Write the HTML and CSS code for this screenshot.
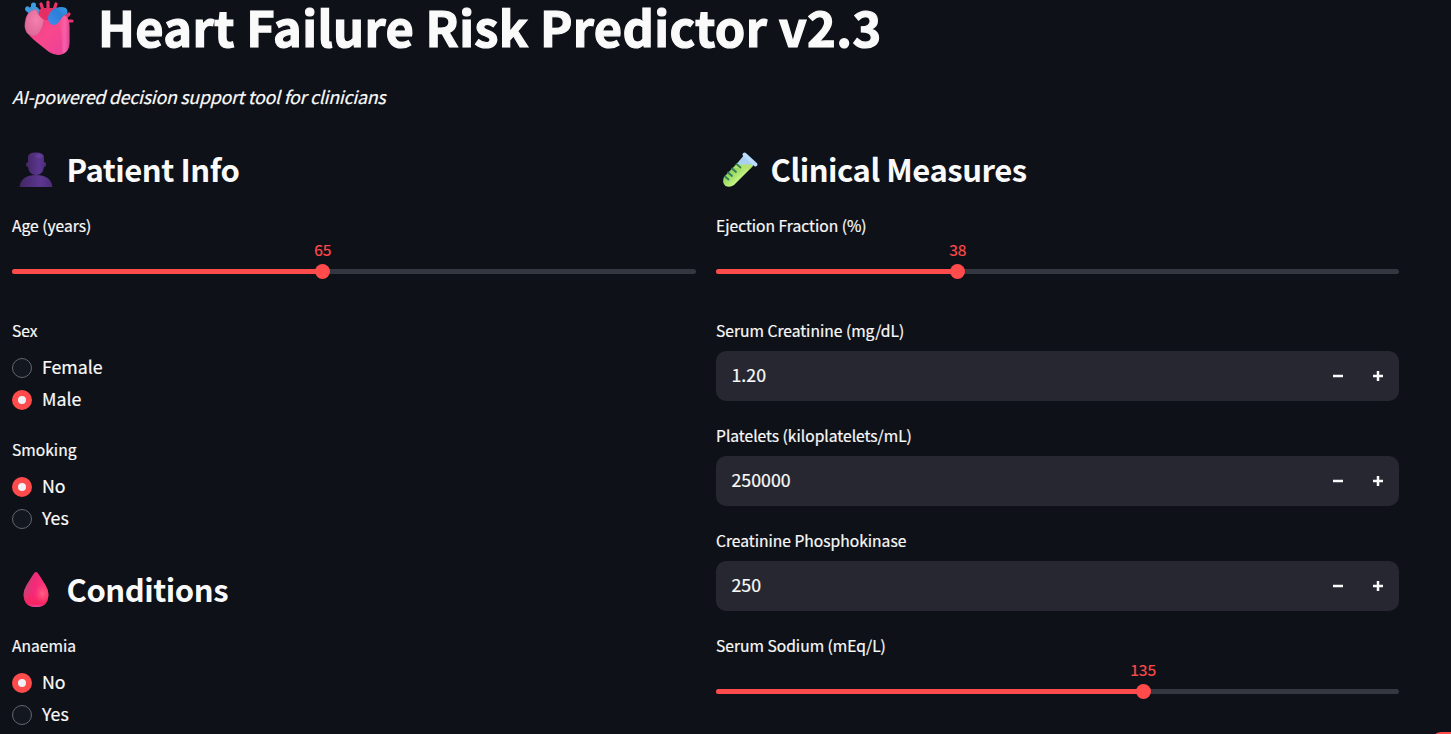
FILE: index.html
```html
<!DOCTYPE html>
<html lang="en">
<head>
<meta charset="utf-8">
<title>Heart Failure Risk Predictor</title>
<link rel="stylesheet" href="styles.css">
</head>
<body>
<main class="app">
  <h1 class="title">
    <svg class="icon-heart" viewBox="0 0 65 60">
      <defs>
        <linearGradient id="hb" x1="0" y1="0" x2="1" y2="1"><stop offset="0" stop-color="#f23b80"/><stop offset=".5" stop-color="#f8478c"/><stop offset="1" stop-color="#e9409c"/></linearGradient>
        <linearGradient id="hr" x1="0" y1="0" x2="1" y2="0"><stop offset="0" stop-color="#ff7db8" stop-opacity="0"/><stop offset=".6" stop-color="#ff8cc4"/><stop offset="1" stop-color="#c83e8c"/></linearGradient>
        <radialGradient id="hl" cx=".6" cy=".4" r=".65"><stop offset="0" stop-color="#f580ae"/><stop offset="1" stop-color="#dc6897"/></radialGradient>
        <linearGradient id="bl" x1="0" y1="1" x2="1" y2="0"><stop offset="0" stop-color="#3f8ded"/><stop offset=".6" stop-color="#2d7fd6"/><stop offset="1" stop-color="#369ce8"/></linearGradient>
      </defs>
      <path d="M12.500 9l5 4M18.500 5l-.5 8" stroke="#3d9be2" stroke-width="5" stroke-linecap="round"/>
      <path d="M15 7l7 0l6 6l-10 4z" fill="#3d9be2"/>
      <path d="M26 4l2 6M33 2v6M41 4l-2 6M49 19l5-5M50 21h7" stroke="#e8346a" stroke-width="3.200" stroke-linecap="round"/>
      <path d="M19 14L46 13Q55 16 54.500 27V43Q54 54.500 43 55Q39 55 34 52L19 40Q10 33 12 24Q14 17 19 14z" fill="url(#hb)"/>
      <path d="M43 21Q49 14 52 17Q54.500 21 54.500 28V42Q54 52 47 54Q48 34 43 21z" fill="url(#hr)" opacity=".4"/>
      <path d="M24 17Q22 8 29 8H40Q45 9 42 15L37 19Q29 22 24 17z" fill="#e62e64"/>
      <path d="M10 23Q11 11 21 9Q23 16 29 20Q27 31 22 35Q17 38 12 33Q9 28 10 23z" fill="url(#hl)" stroke="#c8447f" stroke-opacity=".4" stroke-width=".8"/>
      <path d="M33 18C34 10 43 5 51 8Q54 12 51 15C46 15 46 23 40 25Q33 25 33 18z" fill="url(#bl)"/>
    </svg>
    <span>Heart Failure Risk Predictor v2.3</span>
  </h1>
  <p class="tagline">AI-powered decision support tool for clinicians</p>
  <div class="columns">
    <section class="column">
      <h2 class="heading">
        <svg class="icon" viewBox="0 0 48 48">
          <defs><linearGradient id="pg" x1="0" y1="0" x2="1" y2="0"><stop offset="0" stop-color="#422761"/><stop offset=".65" stop-color="#5c3691"/><stop offset="1" stop-color="#4a2b76"/></linearGradient></defs>
          <path d="M7.500 41Q9 29 24 29Q39 29 40.500 41z" fill="url(#pg)"/>
          <path d="M16 11Q16 6.500 24 6.500Q32 6.500 32 11V16Q34.500 16 34 19Q34 21 32 21Q31 29 24 29Q17 29 16 21Q14 21 14 19Q14 16 16 16z" fill="url(#pg)"/>
          <ellipse cx="27" cy="10" rx="3.500" ry="1.800" fill="#7651a6" opacity=".4"/>
        </svg>
        <span>Patient Info</span>
      </h2>
      <div class="field slider-field">
        <label class="label">Age (years)</label>
        <div class="slider"><div class="fill" style="width:45.450%"><span class="value">65</span></div></div>
      </div>
      <div class="field radio-field">
        <label class="label">Sex</label>
        <div class="options">
          <div class="option"><i class="dot"></i><span>Female</span></div>
          <div class="option"><i class="dot on"></i><span>Male</span></div>
        </div>
      </div>
      <div class="field radio-field">
        <label class="label">Smoking</label>
        <div class="options">
          <div class="option"><i class="dot on"></i><span>No</span></div>
          <div class="option"><i class="dot"></i><span>Yes</span></div>
        </div>
      </div>
      <h2 class="heading">
        <svg class="icon" viewBox="0 0 48 48">
          <defs>
            <linearGradient id="dg" x1="0" y1=".2" x2="1" y2=".5"><stop offset="0" stop-color="#b84a6c"/><stop offset=".45" stop-color="#f5287a"/><stop offset="1" stop-color="#ff3f74"/></linearGradient>
            <radialGradient id="ds" cx=".75" cy=".62" r=".3"><stop offset="0" stop-color="#ff6d86" stop-opacity=".8"/><stop offset="1" stop-color="#ff4478" stop-opacity="0"/></radialGradient>
            <linearGradient id="db" x1="0" y1="0" x2="0" y2="1"><stop offset=".6" stop-color="#ff1f62" stop-opacity="0"/><stop offset=".92" stop-color="#fa2460"/><stop offset="1" stop-color="#e84bb0"/></linearGradient>
            <path id="drop" d="M24 6Q25.500 6 26.500 8L33.500 19Q36.500 24 36.500 28.500Q36 41 24 41Q12 41 11.500 28.500Q11.500 24 14.500 19L21.500 8Q22.500 6 24 6z"/>
          </defs>
          <use href="#drop" fill="url(#dg)"/>
          <use href="#drop" fill="url(#db)"/>
          <use href="#drop" fill="url(#ds)"/>
        </svg>
        <span>Conditions</span>
      </h2>
      <div class="field radio-field">
        <label class="label">Anaemia</label>
        <div class="options">
          <div class="option"><i class="dot on"></i><span>No</span></div>
          <div class="option"><i class="dot"></i><span>Yes</span></div>
        </div>
      </div>
    </section>
    <section class="column">
      <h2 class="heading">
        <svg class="icon" viewBox="0 0 48 48">
          <defs><linearGradient id="tg" x1=".2" y1=".2" x2=".75" y2=".8"><stop offset="0" stop-color="#83bc62"/><stop offset=".4" stop-color="#9ad963"/><stop offset=".8" stop-color="#c7f582"/></linearGradient></defs>
          <path d="M27 11L37 20L18 39Q14 42 9.500 40Q5.500 36 8 31z" fill="url(#tg)"/>
          <path d="M28 9L39 18L35 21L21 18z" fill="#a9d0f2"/>
          <path d="M21 18.500H37L34 23L18 22z" fill="#b6e36d"/>
          <path d="M28.500 8.500L39.500 18.500" stroke="#b9dcff" stroke-width="4" stroke-linecap="round"/>
          <path d="M20.500 18l4 3.500M16 22.500l4 3.500M12 26.500l4 3.500M9 30.500l3.500 3" stroke="#2f7d5b" stroke-width="1.800" stroke-linecap="round"/>
        </svg>
        <span>Clinical Measures</span>
      </h2>
      <div class="field slider-field">
        <label class="label">Ejection Fraction (%)</label>
        <div class="slider"><div class="fill" style="width:35.400%"><span class="value">38</span></div></div>
      </div>
      <div class="field">
        <label class="label">Serum Creatinine (mg/dL)</label>
        <div class="number"><span>1.20</span><svg class="steps" viewBox="0 0 50 10"><path d="M0 5h10M40 5h10M45 0v10"/></svg></div>
      </div>
      <div class="field">
        <label class="label">Platelets (kiloplatelets/mL)</label>
        <div class="number"><span>250000</span><svg class="steps" viewBox="0 0 50 10"><path d="M0 5h10M40 5h10M45 0v10"/></svg></div>
      </div>
      <div class="field">
        <label class="label">Creatinine Phosphokinase</label>
        <div class="number"><span>250</span><svg class="steps" viewBox="0 0 50 10"><path d="M0 5h10M40 5h10M45 0v10"/></svg></div>
      </div>
      <div class="field slider-field">
        <label class="label">Serum Sodium (mEq/L)</label>
        <div class="slider"><div class="fill" style="width:62.550%"><span class="value">135</span></div></div>
      </div>
    </section>
  </div>
</main>
<div class="corner-badge"></div>
</body>
</html>
```
FILE: styles.css
```css
* { box-sizing: border-box; }
body {
  margin: 0;
  height: 734px;
  overflow: hidden;
  background: #0e1117;
  color: #fafafa;
  font-family: "Noto Sans CJK SC", "Noto Sans", sans-serif;
  font-size: 17.750px;
  -webkit-text-stroke: .2px;
}
.app { padding: 0 52px 0 12px; }
.title {
  display: flex;
  align-items: flex-start;
  height: 60px;
  margin: 0;
  font-size: 48.800px;
  font-weight: 700;
  line-height: 52px;
  letter-spacing: .32px;
  white-space: nowrap;
  -webkit-text-stroke: 1.200px;
}
.icon-heart { width: 65px; height: 60px; margin: 0 18px 0 3px; }
.tagline {
  height: 30px;
  margin: 22px 0;
  line-height: 28px;
  font-style: italic;
  letter-spacing: -.23px;
}
.columns {
  display: grid;
  grid-template-columns: 684px 683px;
  gap: 20px;
}
.column { display: flex; flex-direction: column; gap: 20px; }
.heading {
  display: flex;
  align-items: center;
  height: 57px;
  margin: 0;
  padding-top: 14px;
  font-size: 31px;
  font-weight: 600;
  line-height: 41px;
  letter-spacing: -.45px;
  white-space: nowrap;
  -webkit-text-stroke: 0;
}
.heading span { height: 43px; }
.icon { width: 48px; height: 48px; margin-right: 6.500px; }
.label {
  display: block;
  height: 30px;
  font-size: 15.620px;
  line-height: 28px;
}
.slider-field { height: 85px; }
.slider {
  height: 5px;
  margin-top: 28px;
  border-radius: 3px;
  background: #343640;
}
.fill {
  position: relative;
  height: 5px;
  border-radius: 3px 0 0 3px;
  background: #ff4b4b;
}
.fill::after {
  content: "";
  position: absolute;
  top: -5px;
  right: -7.500px;
  width: 15px;
  height: 15px;
  border-radius: 50%;
  background: #ff4b4b;
}
.value {
  position: absolute;
  right: -20px;
  bottom: 12px;
  width: 40px;
  color: #ff4b4b;
  font-size: 15.600px;
  line-height: 26px;
  text-align: center;
}
.radio-field { height: 99px; }
.options { padding-top: 6px; }
.option { display: flex; align-items: center; gap: 10px; height: 32px; line-height: 28px; }
.option span { height: 32px; }
.dot {
  width: 20px;
  height: 20px;
  border: 1px solid #64666d;
  border-radius: 50%;
  background: #131720;
}
.dot.on { border: 6px solid #ff4b4b; background: #f0f2f6; }
.number {
  display: flex;
  align-items: center;
  justify-content: space-between;
  height: 50px;
  margin-top: 5px;
  padding: 0 16px 0 15.500px;
  border-radius: 10px;
  background: #262730;
}
.number span { height: 32px; line-height: 28px; }
.steps { width: 50px; height: 10px; stroke: #fafafa; stroke-width: 2.500; }
.corner-badge {
  position: fixed;
  right: -20px;
  bottom: -38px;
  width: 40px;
  height: 40px;
  border-radius: 10px;
  background: #ff4b4b;
}
```
